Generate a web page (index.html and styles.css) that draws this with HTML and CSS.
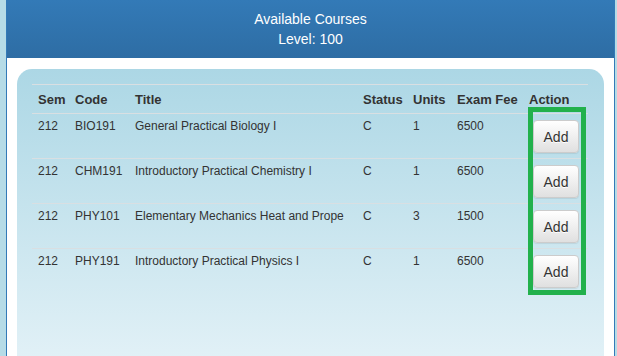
FILE: index.html
```html
<!DOCTYPE html>
<html>
<head>
<meta charset="utf-8">
<link rel="stylesheet" href="styles.css">
</head>
<body>
<div class="page">
  <div class="panel">
    <div class="panel-heading">
      <div>Available Courses</div>
      <div>Level: 100</div>
    </div>
    <div class="panel-body">
      <div class="card">
        <table class="courses">
          <colgroup>
            <col class="c-sem"><col class="c-code"><col class="c-title"><col class="c-status"><col class="c-units"><col class="c-fee"><col class="c-action">
          </colgroup>
          <thead>
            <tr><th>Sem</th><th>Code</th><th>Title</th><th>Status</th><th>Units</th><th>Exam Fee</th><th>Action</th></tr>
          </thead>
          <tbody>
            <tr><td>212</td><td>BIO191</td><td>General Practical Biology I</td><td>C</td><td>1</td><td>6500</td><td><button class="btn">Add</button></td></tr>
            <tr><td>212</td><td>CHM191</td><td>Introductory Practical Chemistry I</td><td>C</td><td>1</td><td>6500</td><td><button class="btn">Add</button></td></tr>
            <tr><td>212</td><td>PHY101</td><td>Elementary Mechanics Heat and Prope</td><td>C</td><td>3</td><td>1500</td><td><button class="btn">Add</button></td></tr>
            <tr><td>212</td><td>PHY191</td><td>Introductory Practical Physics I</td><td>C</td><td>1</td><td>6500</td><td><button class="btn">Add</button></td></tr>
          </tbody>
        </table>
      </div>
    </div>
  </div>
  <div class="highlight"></div>
</div>
</body>
</html>
```

FILE: styles.css
```css
html, body {
  margin: 0;
  padding: 0;
  height: 356px;
  overflow: hidden;
}
body {
  background: #b6dce7;
  font-family: "Liberation Sans", Arial, sans-serif;
  color: #333;
}
.page {
  position: relative;
  padding-left: 6px;
  width: 609px;
  height: 356px;
}
.panel {
  border-left: 1px solid #337ab7;
  border-right: 1px solid #337ab7;
  background: #fff;
  height: 356px;
  overflow: hidden;
}
.panel-heading {
  background: linear-gradient(to bottom, #337ab7 0%, #2e6da4 100%);
  color: #fff;
  text-align: center;
  font-size: 14px;
  line-height: 20px;
  padding: 9px 0 9px;
}
.panel-body {
  padding: 11px 10px 0;
}
.card {
  border-radius: 15px;
  background: linear-gradient(to bottom, #acd7e5 0%, #e6f3f8 100%);
  height: 300px;
  padding: 15px 15px 0;
}
.courses {
  width: 556px;
  border-collapse: collapse;
  table-layout: fixed;
  font-size: 12px;
}
.c-sem { width: 37px; }
.c-code { width: 60px; }
.c-title { width: 228px; }
.c-status { width: 50px; }
.c-units { width: 44px; }
.c-fee { width: 72px; }
.c-action { width: 65px; }
.courses th {
  text-align: left;
  font-size: 13px;
  font-weight: bold;
  line-height: 19px;
  padding: 5px 0 4px 6px;
  border-top: 1px solid #d9dfe2;
  white-space: nowrap;
}
.courses td {
  vertical-align: top;
  line-height: 17px;
  padding: 4px 0 5px 6px;
  border-top: 1px solid #d9dfe2;
  white-space: nowrap;
  overflow: hidden;
}
.btn {
  display: block;
  margin: 2px 0 0 4px;
  width: 46px;
  height: 33px;
  box-sizing: border-box;
  padding: 0;
  font-family: "Liberation Sans", Arial, sans-serif;
  font-size: 14px;
  color: #333;
  background: linear-gradient(to bottom, #fff 0%, #e0e0e0 100%);
  border: 1px solid #ccc;
  border-radius: 4px;
  text-shadow: 0 1px 0 #fff;
  box-shadow: 0 1px 1px rgba(0, 0, 0, 0.075);
}
.highlight {
  position: absolute;
  left: 528px;
  top: 107px;
  width: 58px;
  height: 188px;
  box-sizing: border-box;
  border: 5px solid #22b14c;
}
```
